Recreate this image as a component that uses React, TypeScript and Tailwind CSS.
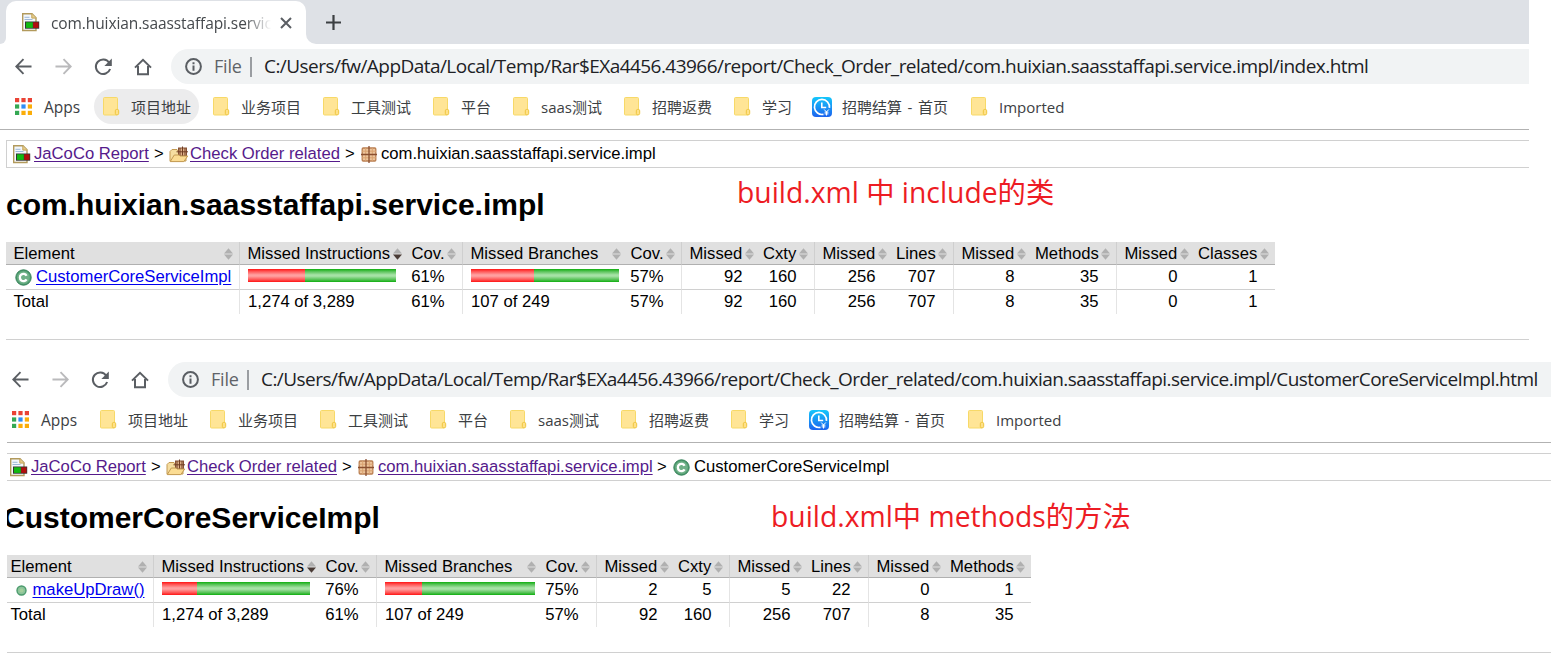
import React from "react";

const ui = "font-['Open_Sans','Noto_Sans_CJK_SC',sans-serif]";

function ReportIcon() {
  return (
    <svg width="19" height="19" viewBox="0 0 19 19" className="shrink-0">
      <path d="M1.7 .8h9.3l4 4V17.5H1.7z" fill="#f3f7fc" stroke="#b29a5c" strokeWidth="1.4" />
      <path d="M10.8 .8v4.3h4.4" fill="#e8cd8a" stroke="#c2a45c" />
      <path d="M3.5 4.3h5M3.5 6.5h8" stroke="#9db8d8" />
      <rect x="4" y="8.5" width="14.2" height="7.2" fill="#333" />
      <rect x="5" y="9.3" width="6.8" height="5.6" fill="#12b912" />
      <rect x="12.2" y="9.3" width="5.3" height="5.6" fill="#b20d0d" />
    </svg>
  );
}

function PackageIcon() {
  return (
    <svg width="16" height="17" viewBox="0 0 16 17" className="shrink-0">
      <rect x="1.2" y="2" width="13.6" height="13" rx="1" fill="#edc59c" stroke="#b97e50" strokeWidth="1.3" />
      <path d="M4.7 2v13M11.3 2v13M1 5.2h14M1 11.8h14" stroke="#d9a372" />
      <path d="M8 0v17M0 8.5h16" stroke="#8a4f30" strokeWidth="1.3" />
    </svg>
  );
}

function GroupIcon() {
  return (
    <svg width="20" height="17" viewBox="0 0 20 17" className="shrink-0">
      <path d="M1 15V5.5L3 3.5h5l1 1.5h8V15z" fill="#f5dda0" stroke="#c39a52" />
      <rect x="9.5" y="2" width="8" height="8" fill="#dfb188" stroke="#875235" />
      <path d="M13.5 .5v10M7.5 5.8h11.5M11 2v8M16 2v8" stroke="#6f3d23" strokeWidth="1" />
      <path d="M1.2 15.6L5.3 9H10l1 1h7.7L14.8 15.6z" fill="#fbdc93" stroke="#c39a52" />
    </svg>
  );
}

function ClassIcon() {
  return (
    <svg width="17" height="17" viewBox="0 0 17 17" className="shrink-0">
      <circle cx="8.5" cy="8.5" r="7.7" fill="#4f9d70" stroke="#358058" strokeWidth="1" />
      <circle cx="8.5" cy="8.5" r="6.3" fill="#6fb087" />
      <path d="M11.6 6.7A3.6 3.6 0 1 0 11.6 10.3" fill="none" stroke="#fff" strokeWidth="2.3" />
    </svg>
  );
}

function MethodIcon() {
  return (
    <svg width="11" height="11" viewBox="0 0 11 11" className="shrink-0">
      <circle cx="5.5" cy="5.5" r="4.5" fill="#8cc49a" stroke="#4a9a6c" strokeWidth="1.4" />
      <circle cx="5.5" cy="5.5" r="2" fill="#a3cf9c" />
    </svg>
  );
}

function SortIcon({ active = false, className = "" }: { active?: boolean; className?: string }) {
  return (
    <svg width="9" height="12" viewBox="0 0 9 12" className={`absolute top-[6px] ${className}`}>
      <path d="M0 5.4L4.5 .3L9 5.4z" fill="#b0b0b0" />
      <path d="M0 6.6L4.5 11.7L9 6.6z" fill={active ? "#4a3c36" : "#b0b0b0"} />
    </svg>
  );
}

function Folder() {
  return (
    <svg width="17" height="19" viewBox="0 0 17 19" className="shrink-0">
      <rect x=".5" y=".5" width="14" height="17.5" rx="1" fill="#ffe596" stroke="#f7d968" />
      <rect x="12.3" y="12.4" width="3.4" height="5.4" rx="1.4" fill="#ffe189" stroke="#efc63e" />
    </svg>
  );
}

function ClockLogo() {
  return (
    <svg width="20" height="20" viewBox="0 0 20 20" className="shrink-0">
      <defs>
        <linearGradient id="clock" x1="0" y1="0" x2="0" y2="1">
          <stop offset="0" stopColor="#15c7fb" />
          <stop offset="1" stopColor="#1c63ee" />
        </linearGradient>
      </defs>
      <rect width="20" height="20" rx="4" fill="url(#clock)" />
      <path d="M11.5 17.3A7.5 7.5 0 1 1 17.4 10.8" fill="none" stroke="#fff" strokeWidth="1.7" />
      <path d="M9.8 5.5v5h4.4" fill="none" stroke="#fff" strokeWidth="1.6" />
      <path d="M12.2 12.5l2.3 2.5L16.8 12.5M14.5 14.7V18.5M12.6 15.2h3.8M12.6 16.9h3.8" fill="none" stroke="#fff" strokeWidth="1" />
    </svg>
  );
}

function AppsGrid() {
  const colors = ["#ea4335", "#ea4335", "#ea4335", "#34a853", "#2f8df5", "#fbad08", "#34a853", "#fbad08", "#fbad08"];
  return (
    <svg width="17" height="17" viewBox="0 0 17 17" className="shrink-0">
      {colors.map((c, i) => (
        <rect key={i} x={(i % 3) * 6.4} y={Math.floor(i / 3) * 6.4} width="4.2" height="4.2" fill={c} />
      ))}
    </svg>
  );
}

function Toolbar({ url }: { url: string }) {
  return (
    <div className="flex h-[35px] items-center pl-[15px]">
      <svg width="17" height="17" viewBox="0 0 18 18" className="shrink-0" fill="none" stroke="#5a5e63" strokeWidth="2">
        <path d="M17.5 9H2M9 1.2L1.3 9L9 16.8" />
      </svg>
      <svg width="17" height="17" viewBox="0 0 18 18" className="ml-[23px] shrink-0" fill="none" stroke="#bababc" strokeWidth="2">
        <path d="M.5 9H16M9 1.2L16.7 9L9 16.8" />
      </svg>
      <svg width="18" height="18" viewBox="0 0 18 18" className="ml-[22px] shrink-0" fill="none" stroke="#5a5e63" strokeWidth="2">
        <path d="M15.2 4.6A7.3 7.3 0 1 0 16.1 11" />
        <path d="M17.8 .6V8H10.4z" fill="#5a5e63" stroke="none" />
      </svg>
      <svg width="18" height="18" viewBox="0 0 18 18" className="ml-[22px] shrink-0" fill="none" stroke="#5a5e63" strokeWidth="2">
        <path d="M1 9.6L9 1.8L17 9.6M4 8V16.2H14V8" />
      </svg>
      <div className={`ml-[19px] flex h-[35px] flex-1 items-center rounded-l-full bg-[#f1f3f4] pl-[14px] text-[19px] whitespace-nowrap ${ui}`}>
        <svg width="17" height="17" viewBox="0 0 17 17" className="shrink-0" fill="none" stroke="#5a5e63">
          <circle cx="8.5" cy="8.5" r="7.4" strokeWidth="2" />
          <path d="M8.5 4.3v2M8.5 7.5v5.2" strokeWidth="2" />
        </svg>
        <span className="ml-[12px] w-[36px] shrink-0 text-[18px] tracking-[-0.2px] text-[#5f6368]">File</span>
        <span className="h-[20px] w-[2px] shrink-0 bg-[#9a9da1]" />
        <span className="ml-[12px] tracking-[-0.545px] text-[#202124]">{url}</span>
      </div>
    </div>
  );
}

const bookmarks = [
  { label: "项目地址", width: "w-[110px]" },
  { label: "业务项目", width: "w-[110px]" },
  { label: "工具测试", width: "w-[110px]" },
  { label: "平台", width: "w-[80px]" },
  { label: "saas测试", width: "w-[111px]" },
  { label: "招聘返费", width: "w-[110px]" },
  { label: "学习", width: "w-[79px]" },
  { label: "招聘结算 - 首页", width: "w-[158px]", clock: true },
  { label: "Imported", width: "w-[110px]" },
];

function Bookmarks({ highlight = false }: { highlight?: boolean }) {
  return (
    <div className={`mt-[5px] flex h-[35px] items-center pl-[15px] text-[15px] whitespace-nowrap text-[#3c4043] ${ui}`}>
      <AppsGrid />
      <span className="ml-[12px] w-[50px] pt-[2px] text-[15.5px]">Apps</span>
      {bookmarks.map((b, i) => (
        <div key={b.label} className={`flex h-full items-center ${b.width}`}>
          <div className={`flex h-full items-center rounded-full ${i === 0 && highlight ? "w-[105px] bg-[#ececed]" : ""}`}>
            <span className={`flex ${b.clock ? "w-[38px] pl-[8px]" : "w-[37px] pl-[9px]"}`}>{b.clock ? <ClockLogo /> : <Folder />}</span>
            <span className={`pt-[2px] ${b.clock ? "[word-spacing:1.7px]" : ""}`}>{b.label}</span>
          </div>
        </div>
      ))}
    </div>
  );
}

type Col = { title: string; width: string; kind: "element" | "bar" | "cov" | "first" | "last"; active?: boolean };

function Bar({ red, width }: { red: number; width: string }) {
  return (
    <div className={`-mt-[3px] flex h-[13px] ${width}`}>
      <div
        className="bg-[linear-gradient(#ff1414,#ff5a5a_20%,#ffa0a0_45%,#ffa0a0_55%,#ff5a5a_80%,#ff1414)]"
        style={{ width: red }}
      />
      <div className="flex-1 bg-[linear-gradient(#0fae0f,#5cc45c_20%,#a6e2a6_45%,#a6e2a6_55%,#5cc45c_80%,#0fae0f)]" />
    </div>
  );
}

function CoverageTable({ cols, rows, width, elementPad }: { cols: Col[]; rows: React.ReactNode[][]; width: string; elementPad: string }) {
  const edge = (c: Col) => (c.kind === "bar" || c.kind === "first" ? "border-l" : "");
  const headPad = (c: Col) => {
    if (c.kind === "element") return elementPad;
    if (c.kind === "cov") return "pl-[8.5px]";
    if (c.kind === "last") return "pl-[7px]";
    return "pl-[7.5px]";
  };
  const pad = (c: Col) => {
    if (c.kind === "element") return elementPad;
    if (c.kind === "bar") return "pl-[8px]";
    if (c.kind === "first") return "pr-[13.5px] text-right";
    return "pr-[17.5px] text-right";
  };
  return (
    <table className={`table-fixed border-separate border-spacing-0 text-[16.67px] leading-[22px] whitespace-nowrap ${width}`}>
      <colgroup>
        {cols.map((c, i) => (
          <col key={i} className={c.width} />
        ))}
      </colgroup>
      <thead>
        <tr className="h-[23px] bg-[#e0e0e0]">
          {cols.map((c, i) => (
            <th key={i} className={`relative border-b border-b-[#b0b0b0] border-l-[#cfcfcf] p-0 text-left font-normal ${edge(c)} ${headPad(c)}`}>
              <div className="h-[22px] leading-[24px]">{c.title}</div>
              <SortIcon active={c.active} className={c.kind === "bar" ? "right-[1px]" : c.kind === "first" ? "right-[2px]" : "right-[6px]"} />
            </th>
          ))}
        </tr>
      </thead>
      <tbody>
        {rows.map((r, ri) => (
          <tr key={ri} className={ri === 0 ? "h-[25px]" : "h-[24px]"}>
            {r.map((cell, i) => (
              <td key={i} className={`border-l-[#e4e4e4] p-0 ${ri === 0 ? "border-b border-b-[#d0d0d0]" : ""} ${edge(cols[i])} ${pad(cols[i])}`}>
                {cell}
              </td>
            ))}
          </tr>
        ))}
      </tbody>
    </table>
  );
}

const packageCols: Col[] = [
  { title: "Element", width: "w-[233px]", kind: "element" },
  { title: "Missed Instructions", width: "w-[164px]", kind: "bar", active: true },
  { title: "Cov.", width: "w-[59px]", kind: "cov" },
  { title: "Missed Branches", width: "w-[160px]", kind: "bar" },
  { title: "Cov.", width: "w-[59px]", kind: "cov" },
  { title: "Missed", width: "w-[75px]", kind: "first" },
  { title: "Cxty", width: "w-[58px]", kind: "last" },
  { title: "Missed", width: "w-[75px]", kind: "first" },
  { title: "Lines", width: "w-[64px]", kind: "last" },
  { title: "Missed", width: "w-[75px]", kind: "first" },
  { title: "Methods", width: "w-[88px]", kind: "last" },
  { title: "Missed", width: "w-[75px]", kind: "first" },
  { title: "Classes", width: "w-[84px]", kind: "last" },
];

const classCols: Col[] = [
  { title: "Element", width: "w-[146px]", kind: "element" },
  { title: "Missed Instructions", width: "w-[164px]", kind: "bar", active: true },
  { title: "Cov.", width: "w-[59px]", kind: "cov" },
  { title: "Missed Branches", width: "w-[161px]", kind: "bar" },
  { title: "Cov.", width: "w-[59px]", kind: "cov" },
  { title: "Missed", width: "w-[75px]", kind: "first" },
  { title: "Cxty", width: "w-[58px]", kind: "last" },
  { title: "Missed", width: "w-[75px]", kind: "first" },
  { title: "Lines", width: "w-[64px]", kind: "last" },
  { title: "Missed", width: "w-[75px]", kind: "first" },
  { title: "Methods", width: "w-[88px]", kind: "last" },
];

const visited = "text-[#551a8b] underline underline-offset-2";
const link = "text-[#0000ee] underline underline-offset-2";

export default function App() {
  return (
    <div className="h-[663px] w-[1562px] overflow-hidden bg-white font-['Liberation_Sans',Arial,sans-serif] text-black">
      <section className="h-[362px] w-[1529px]">
        <div className="flex h-[44px] bg-[#dee1e6]">
          <div className="w-[6px] bg-white">
            <div className="h-full w-[6px] rounded-br-[8px] bg-[#dee1e6]" />
          </div>
          <div className={`mt-px flex w-[300px] items-center rounded-t-[10px] bg-white pl-[15px] text-[15.5px] whitespace-nowrap text-[#45494d] ${ui}`}>
            <ReportIcon />
            <span className="ml-[11px] w-[220px] overflow-hidden pt-[3px] tracking-[-0.1px] [mask-image:linear-gradient(to_right,black_88%,transparent)]">com.huixian.saasstaffapi.service.impl</span>
            <svg width="12" height="12" viewBox="0 0 12 12" className="ml-[9px] shrink-0" stroke="#5a5e63" strokeWidth="2">
              <path d="M1 1L11 11M11 1L1 11" />
            </svg>
          </div>
          <div className="flex-1 bg-white">
            <div className="flex h-full items-center rounded-bl-[10px] bg-[#dee1e6] pl-[20px]">
              <svg width="15" height="15" viewBox="0 0 15 15" stroke="#3c4043" strokeWidth="2.2">
                <path d="M7.5 0V15M0 7.5H15" />
              </svg>
            </div>
          </div>
        </div>
        <div className="pt-[5px]">
          <Toolbar url="C:/Users/fw/AppData/Local/Temp/Rar$EXa4456.43966/report/Check_Order_related/com.huixian.saasstaffapi.service.impl/index.html" />
        </div>
        <Bookmarks highlight />
        <div className="mt-[5px] h-px bg-[#b2b2b2]" />
        <div className="mt-[10px] ml-[6px] flex h-[28px] items-center border border-r-0 border-[#d0d0d0] pl-[5px] text-[16.67px] leading-[22px] whitespace-nowrap">
          <ReportIcon />
          <span className="ml-[3px] w-[120px]"><a className={visited}>JaCoCo Report</a></span>
          <span className="w-[15px]">&gt;</span>
          <GroupIcon />
          <span className="ml-[1px] w-[155px]"><a className={visited}>Check Order related</a></span>
          <span className="w-[16px]">&gt;</span>
          <PackageIcon />
          <span className="ml-[4px]">com.huixian.saasstaffapi.service.impl</span>
        </div>
        <div className="flex h-[74px] pl-[6px]">
          <h1 className="w-[731px] pt-[19px] text-[30px] leading-[36px] font-bold">com.huixian.saasstaffapi.service.impl</h1>
          <p className={`pt-[4px] text-[28.3px] leading-[40px] whitespace-nowrap text-[#ed1c24] ${ui}`}>build.xml 中 include的类</p>
        </div>
        <div className="pl-[6px]">
          <CoverageTable
            width="w-[1269px]"
            elementPad="pl-[7.5px]"
            cols={packageCols}
            rows={[
              [
                <span className="flex items-center gap-[4px] pl-[1.5px]"><ClassIcon /><a className={link}>CustomerCoreServiceImpl</a></span>,
                <Bar red={57} width="w-[148px]" />, "61%", <Bar red={63} width="w-[148px]" />, "57%",
                "92", "160", "256", "707", "8", "35", "0", "1",
              ],
              ["Total", "1,274 of 3,289", "61%", "107 of 249", "57%", "92", "160", "256", "707", "8", "35", "0", "1"],
            ]}
          />
        </div>
        <div className="mt-[25px] ml-[6px] h-px bg-[#d0d0d0]" />
      </section>

      <section className="h-[301px] w-[1551px]">
        <div className="-ml-[3px]">
          <Toolbar url="C:/Users/fw/AppData/Local/Temp/Rar$EXa4456.43966/report/Check_Order_related/com.huixian.saasstaffapi.service.impl/CustomerCoreServiceImpl.html" />
          <Bookmarks />
        </div>
        <div className="mt-[5px] ml-[7px] h-px bg-[#b2b2b2]" />
        <div className="mt-[10px] ml-[7px] flex h-[28px] items-center border-y border-[#d0d0d0] pl-[2px] text-[16.67px] leading-[22px] whitespace-nowrap">
          <ReportIcon />
          <span className="ml-[3px] w-[120px]"><a className={visited}>JaCoCo Report</a></span>
          <span className="w-[15px]">&gt;</span>
          <GroupIcon />
          <span className="ml-[1px] w-[155px]"><a className={visited}>Check Order related</a></span>
          <span className="w-[16px]">&gt;</span>
          <PackageIcon />
          <span className="ml-[4px] w-[279px]"><a className={visited}>com.huixian.saasstaffapi.service.impl</a></span>
          <span className="w-[16px]">&gt;</span>
          <ClassIcon />
          <span className="ml-[4px]">CustomerCoreServiceImpl</span>
        </div>
        <div className="ml-[7px] flex h-[74px]">
          <div className="w-[764px] overflow-hidden">
            <h1 className="-ml-[4px] pt-[19px] text-[30px] leading-[36px] font-bold">CustomerCoreServiceImpl</h1>
          </div>
          <p className={`pt-[15px] text-[28.3px] leading-[40px] whitespace-nowrap text-[#ed1c24] ${ui}`}>build.xml中 methods的方法</p>
        </div>
        <div className="pl-[7px]">
          <CoverageTable
            width="w-[1024px]"
            elementPad="pl-[3.5px]"
            cols={classCols}
            rows={[
              [
                <span className="flex items-center gap-[6px] pl-[5px]"><MethodIcon /><a className={link}>makeUpDraw()</a></span>,
                <Bar red={35} width="w-[148px]" />, "76%", <Bar red={37} width="w-[150px]" />, "75%",
                "2", "5", "5", "22", "0", "1",
              ],
              ["Total", "1,274 of 3,289", "61%", "107 of 249", "57%", "92", "160", "256", "707", "8", "35"],
            ]}
          />
        </div>
        <div className="mt-[25px] ml-[7px] h-px bg-[#d0d0d0]" />
      </section>
    </div>
  );
}
